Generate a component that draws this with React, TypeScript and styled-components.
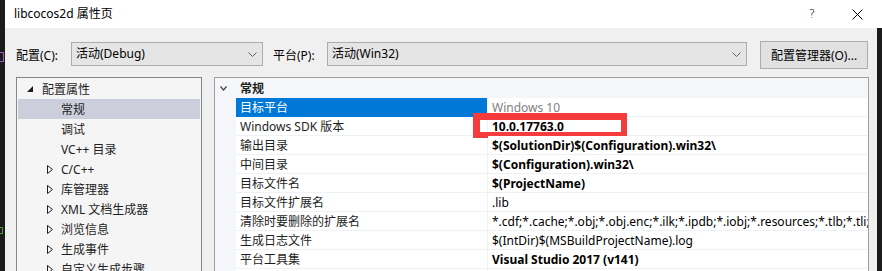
import React from 'react';
import styled, { createGlobalStyle } from 'styled-components';

interface TreeItem {
  label: string;
  level: 0 | 1;
  arrow?: 'open' | 'closed';
  selected?: boolean;
}

interface PropRow {
  name: string;
  value: string;
  bold?: boolean;
  muted?: boolean;
  selected?: boolean;
  marked?: boolean;
}

const treeItems: TreeItem[] = [
  { label: '配置属性', level: 0, arrow: 'open' },
  { label: '常规', level: 1, selected: true },
  { label: '调试', level: 1 },
  { label: 'VC++ 目录', level: 1 },
  { label: 'C/C++', level: 1, arrow: 'closed' },
  { label: '库管理器', level: 1, arrow: 'closed' },
  { label: 'XML 文档生成器', level: 1, arrow: 'closed' },
  { label: '浏览信息', level: 1, arrow: 'closed' },
  { label: '生成事件', level: 1, arrow: 'closed' },
  { label: '自定义生成步骤', level: 1, arrow: 'closed' },
  { label: '代码分析', level: 1, arrow: 'closed' },
];

const rows: PropRow[] = [
  { name: '目标平台', value: 'Windows 10', muted: true, selected: true },
  { name: 'Windows SDK 版本', value: '10.0.17763.0', bold: true, marked: true },
  { name: '输出目录', value: '$(SolutionDir)$(Configuration).win32\\', bold: true },
  { name: '中间目录', value: '$(Configuration).win32\\', bold: true },
  { name: '目标文件名', value: '$(ProjectName)', bold: true },
  { name: '目标文件扩展名', value: '.lib' },
  {
    name: '清除时要删除的扩展名',
    value: '*.cdf;*.cache;*.obj;*.obj.enc;*.ilk;*.ipdb;*.iobj;*.resources;*.tlb;*.tli;*.tmp;*.rsp;*.pgc;*.pgd;*.meta;*.tlog;*.manifest;*.res;*.pch;*.exp',
  },
  { name: '生成日志文件', value: '$(IntDir)$(MSBuildProjectName).log' },
  { name: '平台工具集', value: 'Visual Studio 2017 (v141)', bold: true },
  { name: '配置类型', value: '静态库(.lib)', bold: true },
];

const Chevron = () => (
  <svg width="9" height="5" viewBox="0 0 9 5">
    <polyline points="0.5,0.5 4.5,4.5 8.5,0.5" fill="none" stroke="#606060" strokeWidth="1" />
  </svg>
);

const OpenArrow = () => (
  <svg width="6" height="6" viewBox="0 0 6 6">
    <polygon points="0,6 6,6 6,0" fill="#1e1e1e" />
  </svg>
);

const ClosedArrow = () => (
  <svg width="6" height="9" viewBox="0 0 6 9">
    <polygon points="0.5,0.5 5.5,4.5 0.5,8.5" fill="none" stroke="#1e1e1e" strokeWidth="1" />
  </svg>
);

const CloseIcon = () => (
  <svg width="11" height="11" viewBox="0 0 11 11">
    <path d="M0.5 0.5 L10.5 10.5 M10.5 0.5 L0.5 10.5" stroke="#000" strokeWidth="1" />
  </svg>
);

const App: React.FC = () => {
  return (
    <>
      <GlobalStyle />
      <Page>
        <LeftBackdrop>
          <PurpleBit />
          <GreenBit />
        </LeftBackdrop>
        <Main>
          <TitleBar>
            <Title>libcocos2d 属性页</Title>
            <TitleButtons>
              <HelpMark>?</HelpMark>
              <CloseIcon />
            </TitleButtons>
          </TitleBar>
          <Content>
            <Body>
              <Toolbar>
                <FieldLabel $width={55}>配置(C):</FieldLabel>
                <Combo $width={192}>
                  <span>活动(Debug)</span>
                  <Chevron />
                </Combo>
                <FieldLabel $width={54} $gap={10}>平台(P):</FieldLabel>
                <Combo $width={420}>
                  <span>活动(Win32)</span>
                  <Chevron />
                </Combo>
                <Button>配置管理器(O)...</Button>
              </Toolbar>
              <Panels>
                <Tree>
                  {treeItems.map((item) => (
                    <TreeRow key={item.label} $level={item.level} $selected={item.selected}>
                      <ArrowBox $level={item.level}>
                        {item.arrow === 'open' && <OpenArrow />}
                        {item.arrow === 'closed' && <ClosedArrow />}
                      </ArrowBox>
                      {item.label}
                    </TreeRow>
                  ))}
                </Tree>
                <Grid>
                  <SectionHead>
                    <Gutter>
                      <svg width="7" height="5" viewBox="0 0 7 5">
                        <polyline points="0.5,0.5 3.5,4 6.5,0.5" fill="none" stroke="#444" strokeWidth="1.2" />
                      </svg>
                    </Gutter>
                    <SectionTitle>常规</SectionTitle>
                  </SectionHead>
                  {rows.map((row) => (
                    <Row key={row.name}>
                      <Gutter />
                      <NameCell $selected={row.selected}>{row.name}</NameCell>
                      <ValueCell $bold={row.bold} $muted={row.muted}>
                        {row.marked && <Marker />}
                        {row.value}
                      </ValueCell>
                    </Row>
                  ))}
                </Grid>
              </Panels>
            </Body>
            <RightBackdrop />
          </Content>
        </Main>
      </Page>
    </>
  );
};

const GlobalStyle = createGlobalStyle`
  html, body {
    margin: 0;
    padding: 0;
    background: #1b1b1b;
  }
  body {
    font-family: "Noto Sans", "Noto Sans CJK SC", sans-serif;
    font-size: 12px;
    color: #000;
  }
`;

const Page = styled.div`
  display: flex;
  width: 882px;
  height: 271px;
  overflow: hidden;
`;

const LeftBackdrop = styled.div`
  width: 5px;
  flex: none;
  background: #1b1b1b;
  display: flex;
  flex-direction: column;
`;

const PurpleBit = styled.div`
  margin-top: 52px;
  width: 4px;
  height: 10px;
  border: 1px solid #a05ab8;
  border-left: none;
  box-sizing: border-box;
`;

const GreenBit = styled.div`
  margin-top: 165px;
  width: 3px;
  height: 7px;
  border: 1px solid #4e9a3c;
  border-left: none;
  box-sizing: border-box;
`;

const Main = styled.div`
  flex: 1;
  display: flex;
  flex-direction: column;
  min-width: 0;
`;

const TitleBar = styled.div`
  height: 28px;
  flex: none;
  background: #fff;
  display: flex;
  align-items: center;
  padding-left: 9px;
`;

const Title = styled.div`
  flex: 1;
  font-size: 12px;
  line-height: 16px;
  padding-bottom: 1px;
`;

const TitleButtons = styled.div`
  display: flex;
  align-items: center;
  gap: 37px;
  padding-right: 19px;
`;

const HelpMark = styled.span`
  font-family: "DejaVu Sans", sans-serif;
  font-size: 12px;
  font-weight: 300;
  line-height: 12px;
`;

const Content = styled.div`
  flex: 1;
  display: flex;
  min-height: 0;
`;

const Body = styled.div`
  flex: 1;
  background: #f0f0f0;
  padding: 13px 8px 0 11px;
  display: flex;
  flex-direction: column;
  min-width: 0;
`;

const RightBackdrop = styled.div`
  width: 5px;
  flex: none;
  background: #1b1b1b;
`;

const Toolbar = styled.div`
  display: flex;
  align-items: center;
  height: 28px;
`;

const FieldLabel = styled.div<{ $width: number; $gap?: number }>`
  width: ${(p) => p.$width}px;
  margin-left: ${(p) => p.$gap || 0}px;
  flex: none;
  white-space: nowrap;
`;

const Combo = styled.div<{ $width: number }>`
  width: ${(p) => p.$width}px;
  height: 24px;
  box-sizing: border-box;
  flex: none;
  background: #e5e5e5;
  border: 1px solid #adadad;
  display: flex;
  align-items: center;
  justify-content: space-between;
  padding: 0 5px 0 4px;
  margin-top: -2px;

  span {
    line-height: 16px;
  }
`;

const Button = styled.div`
  margin-left: 13px;
  width: 108px;
  height: 28px;
  box-sizing: border-box;
  background: #e1e1e1;
  border: 1px solid #adadad;
  display: flex;
  align-items: center;
  justify-content: center;
  white-space: nowrap;
`;

const Panels = styled.div`
  margin-top: 8px;
  display: flex;
  gap: 12px;
  flex: 1;
`;

const Tree = styled.div`
  width: 186px;
  flex: none;
  box-sizing: border-box;
  background: #f5f5f5;
  border: 1px solid #828790;
  border-bottom: none;
  padding: 1px;
`;

const TreeRow = styled.div<{ $level: number; $selected?: boolean }>`
  height: 20px;
  display: flex;
  align-items: center;
  padding-left: ${(p) => (p.$level === 0 ? 9 : 29)}px;
  background: ${(p) => (p.$selected ? '#cccedb' : 'transparent')};
  color: #1e1e1e;
  white-space: nowrap;
`;

const ArrowBox = styled.span<{ $level: number }>`
  width: ${(p) => (p.$level === 0 ? 15 : 14)}px;
  flex: none;
  display: flex;
  align-items: center;
`;

const Grid = styled.div`
  width: 655px;
  flex: none;
  box-sizing: border-box;
  border: 1px solid #a0a0a0;
  border-bottom: none;
  background: #f4f6f9;
  overflow: hidden;
`;

const SectionHead = styled.div`
  height: 20px;
  display: flex;
  align-items: center;
`;

const Gutter = styled.div`
  width: 21px;
  flex: none;
  display: flex;
  align-items: center;
  padding-left: 5px;
  box-sizing: border-box;
`;

const SectionTitle = styled.div`
  font-weight: 700;
  padding-left: 4px;
  color: #1e1e1e;
`;

const Row = styled.div`
  height: 19px;
  display: flex;
`;

const NameCell = styled.div<{ $selected?: boolean }>`
  width: 252px;
  flex: none;
  box-sizing: border-box;
  padding-left: 4px;
  display: flex;
  align-items: center;
  white-space: nowrap;
  background: ${(p) => (p.$selected ? '#0078d7' : '#fff')};
  color: ${(p) => (p.$selected ? '#fff' : '#1e1e1e')};
  border-bottom: 1px solid ${(p) => (p.$selected ? '#0078d7' : '#eef1f5')};
  border-right: 1px solid #eef1f5;
`;

const ValueCell = styled.div<{ $bold?: boolean; $muted?: boolean }>`
  flex: 1;
  position: relative;
  min-width: 0;
  box-sizing: border-box;
  padding-left: 4px;
  display: flex;
  align-items: center;
  white-space: nowrap;
  overflow: visible;
  background: #fff;
  border-bottom: 1px solid #eef1f5;
  font-weight: ${(p) => (p.$bold ? 700 : 400)};
  color: ${(p) => (p.$muted ? '#808080' : '#000')};
`;

const Marker = styled.div`
  position: absolute;
  left: -15px;
  top: -4px;
  width: 154px;
  height: 25px;
  box-sizing: border-box;
  border: 6px solid #f53b3b;
  border-left-width: 7px;
  border-top-width: 7px;
  pointer-events: none;
`;

export default App;
